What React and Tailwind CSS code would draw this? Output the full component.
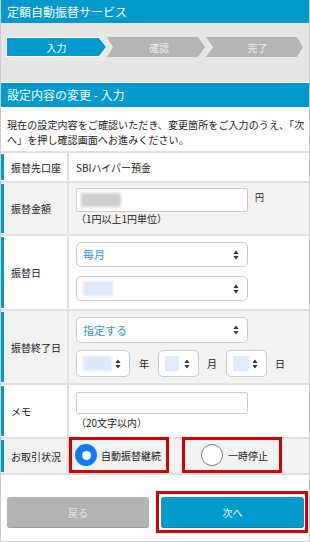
import React from "react";

function UpDown() {
  return (
    <svg width="6" height="10" viewBox="0 0 6 10" className="shrink-0">
      <path d="M3 0.5L5.6 4H0.4z M3 9.5L0.4 6H5.6z" fill="#333" />
    </svg>
  );
}

function Select({ w, h = 26, children }) {
  return (
    <div
      className={`flex items-center justify-between border border-[#cccccc] rounded-[5px] bg-white pl-[6px] pr-[8px] ${w}`}
      style={{ height: h }}
    >
      <div className="flex items-center">{children}</div>
      <UpDown />
    </div>
  );
}

function Label({ children }) {
  return (
    <div className="w-[68px] shrink-0 flex items-stretch border-r-2 border-[#e0e0e0]">
      <div className="w-[3px] bg-[#0099cc] my-[1px]" />
      <div className="flex items-center pl-[7px] text-[10px] text-[#222]">{children}</div>
    </div>
  );
}

export default function App() {
  return (
    <div className="w-[310px] h-[542px] bg-white border-x border-b border-[#cccccc] font-['Noto_Sans_CJK_JP','Liberation_Sans',sans-serif] text-[#222] overflow-hidden">
      <div className="h-[23px] bg-[#009bcc] flex items-center pl-[6px] text-[12px] text-white leading-none">
        定額自動振替サービス
      </div>
      <div className="h-[60px] bg-[#e6e6e6] border-b border-white pt-[14px]">
        <div className="flex ml-[5px]">
          <div className="w-[101px] h-[20px] bg-white p-[1px] [clip-path:polygon(0_0,94px_0,101px_50%,94px_100%,0_100%)]">
            <div className="w-[99px] h-[18px] bg-[#009bcc] flex items-center justify-center text-[10px] text-white [clip-path:polygon(0_0,92px_0,99px_50%,92px_100%,0_100%)]">
              入力
            </div>
          </div>
          <div className="w-[98px] h-[20px] bg-[#b5b5b5] flex items-center justify-center pl-[6px] text-[10px] text-[#ececec] [clip-path:polygon(0_0,91px_0,98px_50%,91px_100%,0_100%,6px_50%)]">
            確認
          </div>
          <div className="ml-[1px] w-[97px] h-[20px] bg-[#b5b5b5] flex items-center justify-center pl-[6px] text-[10px] text-[#ececec] [clip-path:polygon(0_0,91px_0,97px_50%,91px_100%,0_100%,7px_50%)]">
            完了
          </div>
        </div>
      </div>
      <div className="h-[24px] bg-[#009bcc] flex items-center pl-[6px] text-[12px] text-white leading-none">
        設定内容の変更 - 入力
      </div>
      <div className="pt-[10px] pb-[4px] pl-[6px] pr-[4px] text-[10px] leading-[15px] tracking-[0.1px]">
        現在の設定内容をご確認いただき、変更箇所をご入力のうえ、「次へ」を押し確認画面へお進みください。
      </div>

      {/* row 1 */}
      <div className="h-[30px] flex border-t-2 border-[#e0e0e0] bg-white">
        <Label>振替先口座</Label>
        <div className="flex items-center pl-[7px] text-[10px]">SBIハイパー預金</div>
      </div>

      {/* row 2 */}
      <div className="h-[53px] flex border-t-2 border-[#e0e0e0] bg-[#f2f2f2]">
        <Label>振替金額</Label>
        <div className="flex flex-col pl-[7px] pt-[5px]">
          <div className="flex items-start">
            <div className="w-[172px] h-[24px] bg-white border border-[#cccccc] rounded-[2px] flex items-center pl-[4px]">
              <div className="w-[40px] h-[14px] bg-[#cfcfcf] blur-[1.5px]" />
            </div>
            <div className="ml-[7px] mt-[4px] text-[9px] leading-[12px]">円</div>
          </div>
          <div className="text-[10px] leading-[14px]">（1円以上1円単位）</div>
        </div>
      </div>

      {/* row 3 */}
      <div className="h-[75px] flex border-t-2 border-[#e0e0e0] bg-white">
        <Label>振替日</Label>
        <div className="flex flex-col pl-[7px] pt-[6px] gap-[9px]">
          <Select w="w-[172px]" h={25}>
            <span className="text-[11px] text-[#3a8ee6] leading-none">毎月</span>
          </Select>
          <Select w="w-[172px]" h={25}>
            <div className="w-[30px] h-[15px] bg-[#dce8f9] blur-[1px]" />
          </Select>
        </div>
      </div>

      {/* row 4 */}
      <div className="h-[74px] flex border-t-2 border-[#e0e0e0] bg-[#f2f2f2]">
        <Label>振替終了日</Label>
        <div className="flex flex-col pl-[7px] pt-[6px] gap-[7px]">
          <Select w="w-[172px]" h={26}>
            <span className="text-[11px] text-[#3a8ee6] leading-none">指定する</span>
          </Select>
          <div className="flex items-center text-[10px]">
            <Select w="w-[54px]" h={27}>
              <div className="w-[29px] h-[15px] bg-[#dce8f9] blur-[1px]" />
            </Select>
            <span className="ml-[9px] mr-[9px]">年</span>
            <Select w="w-[41px]" h={27}>
              <div className="w-[14px] h-[15px] bg-[#e0eaf8] blur-[0.5px]" />
            </Select>
            <span className="ml-[8px] mr-[9px]">月</span>
            <Select w="w-[41px]" h={27}>
              <div className="w-[16px] h-[15px] bg-[#e0eaf8] blur-[0.5px]" />
            </Select>
            <span className="ml-[8px]">日</span>
          </div>
        </div>
      </div>

      {/* row 5 */}
      <div className="h-[54px] flex border-t-2 border-[#e0e0e0] bg-white">
        <Label>メモ</Label>
        <div className="flex flex-col pl-[7px] pt-[7px]">
          <div className="w-[172px] h-[22px] bg-white border border-[#cccccc] rounded-[2px]" />
          <div className="text-[10px] leading-[14px] mt-[2px]">（20文字以内）</div>
        </div>
      </div>

      {/* row 6 */}
      <div className="h-[38px] flex border-y-2 border-[#e0e0e0] bg-[#f2f2f2]">
        <Label>お取引状況</Label>
        <div className="flex items-stretch -mt-[2px] h-[36px]">
          <div className="w-[100px] border-[3px] border-[#d40000] flex items-center pl-[3px]">
            <div className="w-[22px] h-[22px] shrink-0 rounded-full bg-[#0a7cff] flex items-center justify-center">
              <div className="w-[9px] h-[9px] rounded-full bg-white" />
            </div>
            <span className="ml-[4px] text-[10px] whitespace-nowrap">自動振替継続</span>
          </div>
          <div className="ml-[13px] w-[100px] border-[3px] border-[#d40000] flex items-center pl-[16px]">
            <div className="w-[22px] h-[22px] shrink-0 rounded-full bg-white border border-[#777]" />
            <span className="ml-[5px] text-[10px] whitespace-nowrap">一時停止</span>
          </div>
        </div>
      </div>

      {/* buttons */}
      <div className="flex items-start pl-[6px] pt-[16px]">
        <div className="mt-[6px] w-[142px] h-[31px] rounded-[3px] bg-[#b3b3b3] border-b border-[#a0a0a0] flex items-center justify-center text-[10px] text-[#e6e6e6]">
          戻る
        </div>
        <div className="ml-[7px] w-[152px] h-[42px] border-[3px] border-[#d40000] pl-[2px] pt-[3px]">
          <div className="w-[143px] h-[31px] rounded-[3px] bg-[#009bcc] border-b border-[#0085b0] flex items-center justify-center text-[10px] text-white">
            次へ
          </div>
        </div>
      </div>
    </div>
  );
}
